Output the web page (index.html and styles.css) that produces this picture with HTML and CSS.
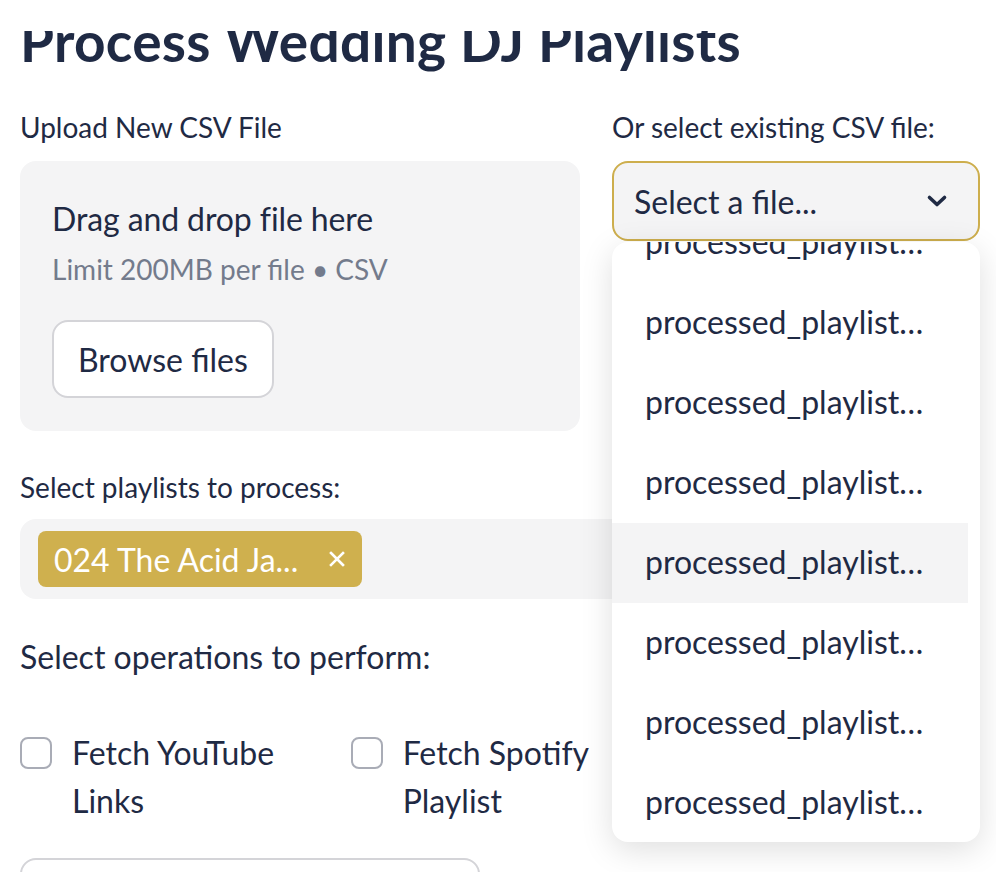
FILE: index.html
```html
<!DOCTYPE html>
<html lang="en">
<head>
<meta charset="utf-8">
<title>Process Wedding DJ Playlists</title>
<link rel="stylesheet" href="styles.css">
</head>
<body>
<header class="topbar"></header>
<main class="page">
  <h1 class="title">Process Wedding DJ Playlists</h1>

  <div class="cols-2">
    <section class="field">
      <label class="label">Upload New CSV File</label>
      <div class="dropzone">
        <div class="dz-title">Drag and drop file here</div>
        <div class="dz-hint">Limit 200MB per file • CSV</div>
        <button class="btn">Browse files</button>
      </div>
    </section>

    <section class="field">
      <label class="label">Or select existing CSV file:</label>
      <div class="select-wrap">
        <div class="select">
          <span class="select-text">Select a file...</span>
          <svg class="chevron" width="22" height="14" viewBox="0 0 22 14" aria-hidden="true">
            <path d="M3.5 3.5 L11 10.5 L18.5 3.5" fill="none" stroke="#1f2a44" stroke-width="3.6" stroke-linecap="round" stroke-linejoin="round"/>
          </svg>
        </div>
        <div class="menu">
          <ul class="menu-list">
            <li class="menu-item">processed_playlist…</li>
            <li class="menu-item">processed_playlist…</li>
            <li class="menu-item">processed_playlist…</li>
            <li class="menu-item">processed_playlist…</li>
            <li class="menu-item is-active">processed_playlist…</li>
            <li class="menu-item">processed_playlist…</li>
            <li class="menu-item">processed_playlist…</li>
            <li class="menu-item">processed_playlist…</li>
          </ul>
        </div>
      </div>
    </section>
  </div>

  <section class="field multi-field">
    <label class="label">Select playlists to process:</label>
    <div class="multiselect">
      <span class="tag">
        <span class="tag-text">024 The Acid Ja...</span>
        <svg class="tag-x" width="16" height="16" viewBox="0 0 16 16" aria-hidden="true">
          <path d="M2 2 L14 14 M14 2 L2 14" stroke="#ffffff" stroke-width="2.6" stroke-linecap="square"/>
        </svg>
      </span>
    </div>
  </section>

  <p class="ops-title">Select operations to perform:</p>

  <div class="cols-3">
    <label class="check">
      <span class="check-box"></span>
      <span class="check-label">Fetch YouTube Links</span>
    </label>
    <label class="check">
      <span class="check-box"></span>
      <span class="check-label">Fetch Spotify Playlist</span>
    </label>
    <div class="check-empty"></div>
  </div>

  <button class="btn btn-wide">Process Playlists</button>
</main>
</body>
</html>
```

FILE: styles.css
```css
* {
  box-sizing: border-box;
}

html, body {
  margin: 0;
  padding: 0;
  background: #ffffff;
}

body {
  font-family: "Lato", "Noto Sans", sans-serif;
  color: #1f2a44;
}

.topbar {
  position: fixed;
  top: 0;
  left: 0;
  right: 0;
  height: 31px;
  background: #ffffff;
  z-index: 20;
}

.page {
  width: 960px;
  margin: 0 0 0 20px;
  padding-top: 8px;
}

.title {
  margin: 0;
  font-size: 55px;
  line-height: 66px;
  font-weight: 700;
  letter-spacing: 0.3px;
}

.cols-2 {
  display: grid;
  grid-template-columns: 560px 1fr;
  column-gap: 32px;
  margin-top: 33px;
  align-items: start;
}

.field {
  display: flex;
  flex-direction: column;
}

.label {
  display: block;
  font-size: 28px;
  line-height: 40px;
  margin-bottom: 14px;
}

.dropzone {
  background: #f4f4f5;
  border-radius: 16px;
  padding: 36px 32px 33px;
  height: 270px;
  display: flex;
  flex-direction: column;
  align-items: flex-start;
}

.dz-title {
  font-size: 32px;
  line-height: 44px;
  letter-spacing: -0.1px;
}

.dz-hint {
  font-size: 28px;
  line-height: 40px;
  margin-top: 8px;
  color: #737b8c;
}

.btn {
  font-family: inherit;
  color: #1f2a44;
  font-size: 32px;
  height: 78px;
  padding: 0 24px;
  background: #ffffff;
  border: 2px solid #d4d4d8;
  border-radius: 16px;
  cursor: pointer;
}

.dropzone .btn {
  margin-top: 31px;
}

.select-wrap {
  position: relative;
}

.select {
  height: 80px;
  background: #f4f4f5;
  border: 2px solid #cdae4d;
  border-radius: 16px;
  padding: 0 22px 0 20px;
  display: flex;
  align-items: center;
  justify-content: space-between;
}

.select-text {
  font-size: 32px;
}

.chevron {
  display: block;
  margin-right: 8px;
}

.menu {
  position: absolute;
  left: 0;
  right: 0;
  top: calc(100% + 1px);
  height: 600px;
  background: #ffffff;
  border-radius: 16px;
  box-shadow: 0 8px 32px rgba(0, 0, 0, 0.13);
  overflow: hidden;
  z-index: 10;
}

.menu-list {
  list-style: none;
  margin: -39px 12px 0 0;
  padding: 0;
}

.menu-item {
  height: 80px;
  line-height: 78px;
  padding-left: 33px;
  font-size: 32px;
  white-space: nowrap;
}

.menu-item.is-active {
  background: #f4f4f5;
}

.multi-field {
  margin-top: 36px;
}

.multi-field .label {
  margin-bottom: 12px;
}

.multiselect {
  height: 80px;
  background: #f4f4f5;
  border-radius: 16px;
  padding: 12px 18px;
  display: flex;
  align-items: center;
}

.tag {
  height: 56px;
  background: #cfb04e;
  color: #ffffff;
  border-radius: 8px;
  padding: 0 17px 0 16px;
  display: inline-flex;
  align-items: center;
  gap: 31px;
}

.tag-text {
  font-size: 32px;
}

.tag-x {
  display: block;
}

.ops-title {
  margin: 34px 0 0;
  font-size: 32px;
  line-height: 48px;
}

.cols-3 {
  display: grid;
  grid-template-columns: repeat(3, 1fr);
  column-gap: 32px;
  margin-top: 48px;
}

.check {
  display: flex;
  align-items: flex-start;
  gap: 20px;
}

.check-box {
  flex: none;
  width: 32px;
  height: 32px;
  margin-top: 8px;
  border: 2px solid #a9acb6;
  border-radius: 8px;
  background: #ffffff;
}

.check-label {
  font-size: 32px;
  line-height: 48px;
}

.btn-wide {
  display: block;
  width: 460px;
  height: 80px;
  margin-top: 33px;
  margin-bottom: 40px;
}
```
